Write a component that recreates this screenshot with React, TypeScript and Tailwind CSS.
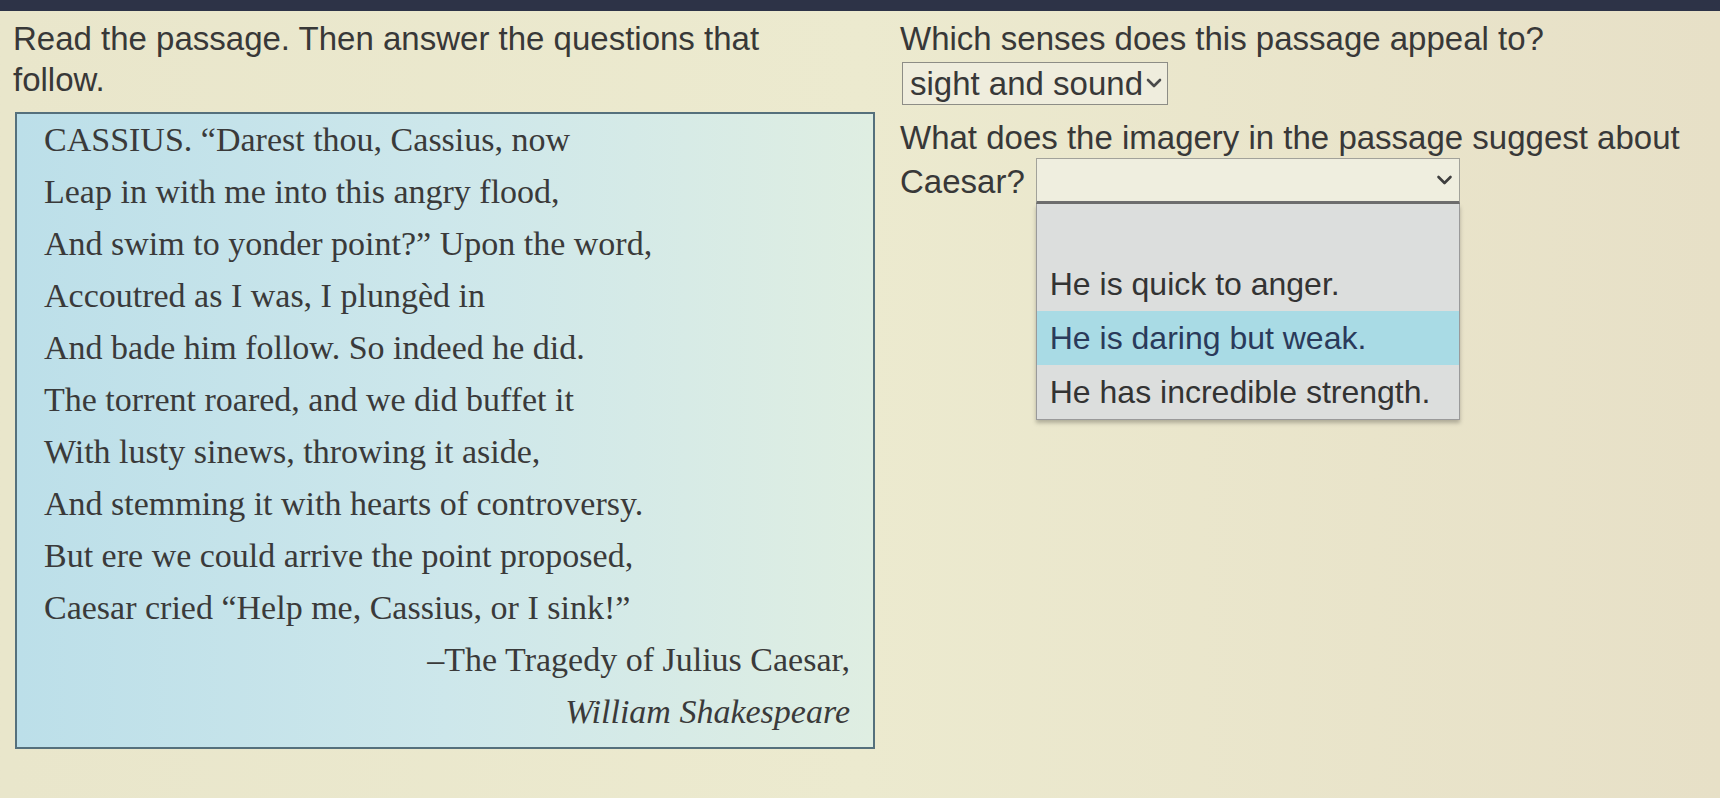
import React from "react";

const poem = [
  "CASSIUS. “Darest thou, Cassius, now",
  "Leap in with me into this angry flood,",
  "And swim to yonder point?” Upon the word,",
  "Accoutred as I was, I plungèd in",
  "And bade him follow. So indeed he did.",
  "The torrent roared, and we did buffet it",
  "With lusty sinews, throwing it aside,",
  "And stemming it with hearts of controversy.",
  "But ere we could arrive the point proposed,",
  "Caesar cried “Help me, Cassius, or I sink!”",
];

const options = ["He is quick to anger.", "He is daring but weak.", "He has incredible strength."];

function Chevron({ className }: { className?: string }) {
  return (
    <svg viewBox="0 0 16 10" className={className} fill="none" stroke="currentColor" strokeWidth={2.6} strokeLinecap="round" strokeLinejoin="round">
      <path d="M2 2l6 6 6-6" />
    </svg>
  );
}

export default function App() {
  return (
    <div className="min-h-[798px] w-full bg-gradient-to-r from-[#e9e6cb] via-[#eceacf] to-[#e7e0c7] font-['Liberation_Sans',Arial,sans-serif] text-[#383838]">
      <div className="h-[11px] bg-[#2d3347]" />
      <div className="flex">
        {/* Passage column */}
        <div className="w-[900px] shrink-0 pl-[13px] pt-[7px]">
          <p className="w-[800px] text-[33px] leading-[41px]">Read the passage. Then answer the questions that follow.</p>
          <div className="mt-3 ml-[2px] w-[860px] h-[637px] border-2 border-[#55707c] bg-gradient-to-r from-[#bcdfe9] via-[#cde7eb] to-[#dfeee2] pl-[27px] pr-[23px] font-['Liberation_Serif','Times_New_Roman',serif] text-[34px] leading-[52px] text-[#3a3a3a]">
            {poem.map((line) => (
              <div key={line}>{line}</div>
            ))}
            <div className="text-right">–The Tragedy of Julius Caesar,</div>
            <div className="text-right italic">William Shakespeare</div>
          </div>
        </div>

        {/* Questions column */}
        <div className="pt-[7px]">
          <p className="text-[33px] leading-[41px]">Which senses does this passage appeal to?</p>
          <div className="mt-[3px] ml-[2px] flex h-[43px] w-[266px] items-center border border-[#8d8d86] bg-[#efeddd] pl-[7px] text-[33px]">
            <span>sight and sound</span>
            <Chevron className="ml-[2px] mt-[-2px] h-[10px] w-[18px] text-[#4a4a4a]" />
          </div>

          <p className="mt-[12px] text-[33px] leading-[41px]">What does the imagery in the passage suggest about</p>
          <div className="flex items-center text-[33px] leading-[41px]">
            <span>Caesar?</span>
            <div className="relative ml-[11px]">
              <div className="flex h-[46px] w-[424px] items-start justify-end border border-b-[3px] border-[#a2a29a] border-b-[#6e6e6e] bg-[#efeedf] pr-[6px] pt-[16px]">
                <Chevron className="h-[10px] w-[17px] text-[#3f3f3f]" />
              </div>
              <div className="absolute left-0 top-full w-[424px] border border-t-0 border-[#9a9a9a] bg-[#dcdedd] text-[32px] text-[#333] shadow-[0_3px_4px_rgba(0,0,0,0.25)]">
                <div className="h-[53px]" />
                {options.map((o, i) => (
                  <div
                    key={o}
                    className={`flex h-[54px] items-center pl-[13px] ${i === 1 ? "bg-[#a9dbe5] text-[#2a3a5a]" : ""}`}
                  >
                    {o}
                  </div>
                ))}
              </div>
            </div>
          </div>
        </div>
      </div>
    </div>
  );
}
